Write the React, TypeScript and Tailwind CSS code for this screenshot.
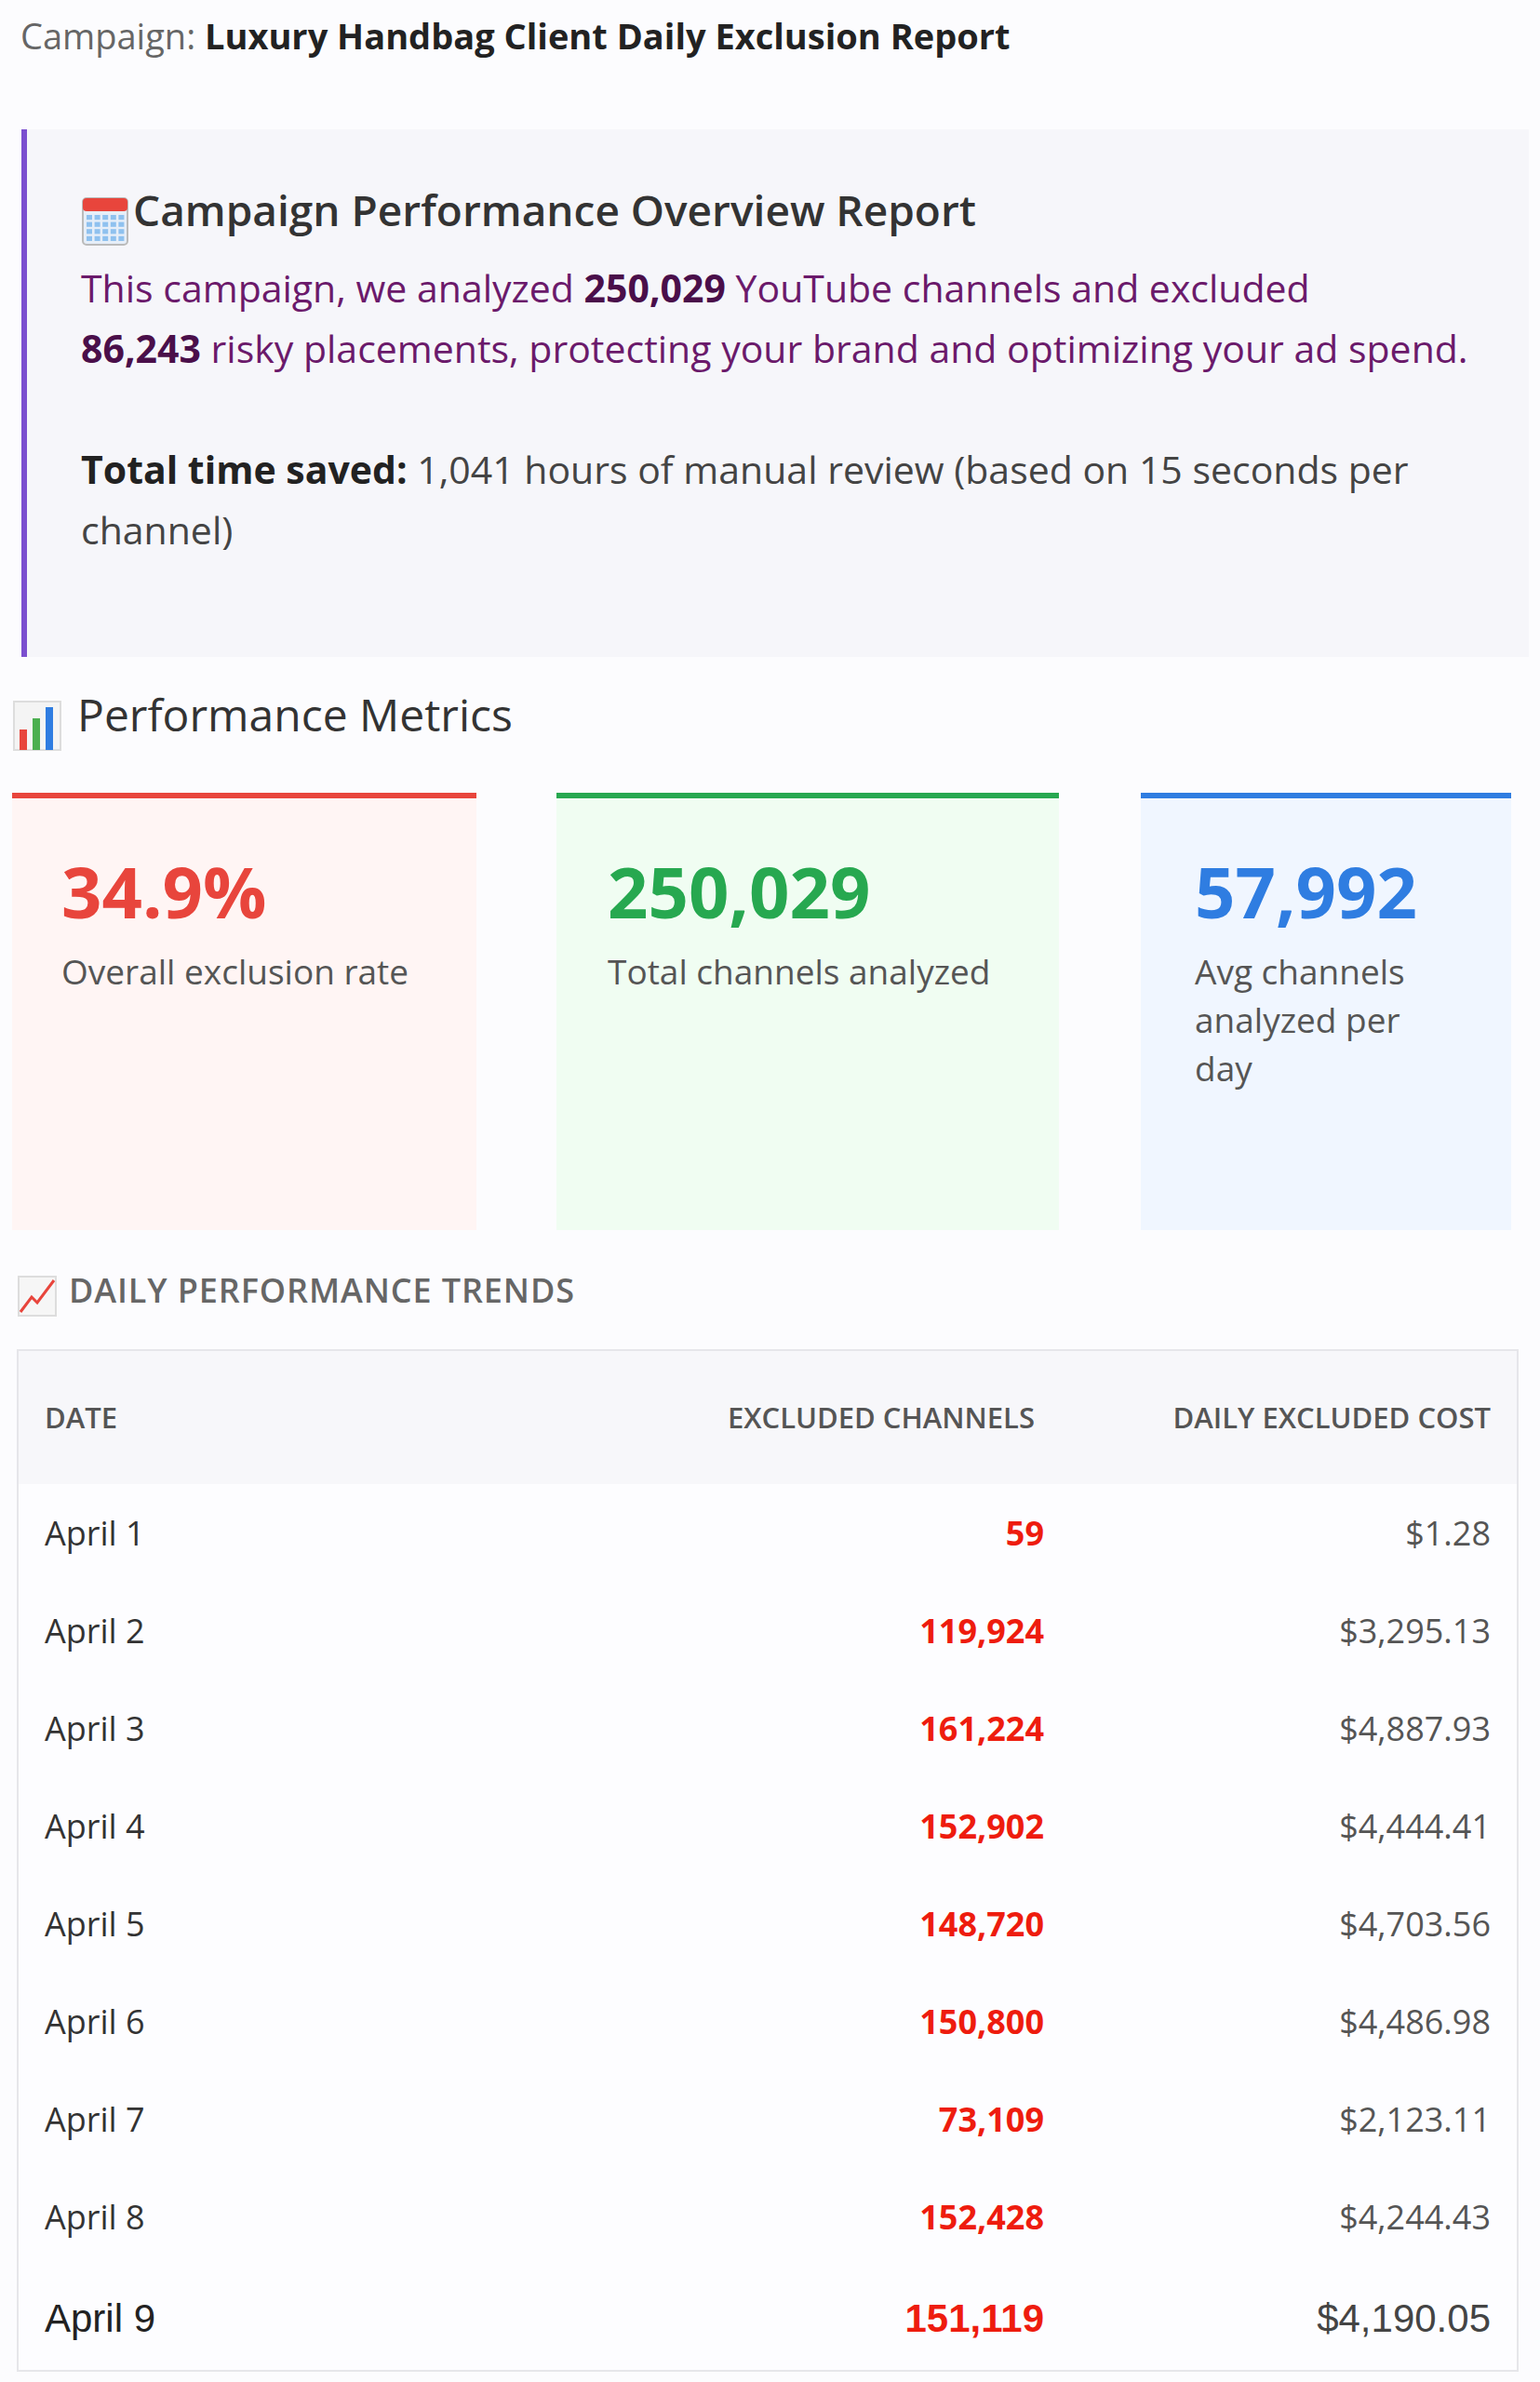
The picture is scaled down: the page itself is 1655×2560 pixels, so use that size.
import React from "react";

const rows = [
  ["April 1", "59", "$1.28"],
  ["April 2", "119,924", "$3,295.13"],
  ["April 3", "161,224", "$4,887.93"],
  ["April 4", "152,902", "$4,444.41"],
  ["April 5", "148,720", "$4,703.56"],
  ["April 6", "150,800", "$4,486.98"],
  ["April 7", "73,109", "$2,123.11"],
  ["April 8", "152,428", "$4,244.43"],
];

const Calendar = () => (
  <svg width="52" height="56" viewBox="0 0 26 28" className="inline-block mr-1 -mb-2">
    <rect x="1" y="2" width="24" height="25" rx="2" fill="#e6eef8" stroke="#bbb" />
    <rect x="1" y="2" width="24" height="7" rx="2" fill="#e8453c" />
    {[0, 1, 2, 3].map((r) =>
      [0, 1, 2, 3, 4].map((c) => (
        <rect key={r + "-" + c} x={3 + c * 4.3} y={11 + r * 3.8} width="3" height="2.6" fill="#8fc1ef" />
      ))
    )}
  </svg>
);

const Bars = () => (
  <svg width="54" height="56" viewBox="0 0 27 28" className="inline-block mr-4 -mb-2">
    <rect x="1" y="1" width="25" height="26" fill="#f4f4f4" stroke="#ddd" />
    <rect x="4" y="16" width="4" height="11" fill="#e8453c" />
    <rect x="11" y="10" width="4" height="17" fill="#4caf50" />
    <rect x="18" y="4" width="4" height="23" fill="#2f7de1" />
  </svg>
);

const Trend = () => (
  <svg width="44" height="46" viewBox="0 0 22 23" className="inline-block mr-3 -mb-1">
    <rect x="1" y="1" width="20" height="21" fill="#f6f6f6" stroke="#ddd" />
    <path d="M2 20 L8 12 L11 15 L20 3" stroke="#e8453c" strokeWidth="1.5" fill="none" />
  </svg>
);

export default function App() {
  const font = { fontFamily: '"Open Sans", "Noto Sans", sans-serif' };
  const lib = { fontFamily: '"Liberation Sans", Arial, sans-serif' };
  return (
    <div className="w-[1655px] h-[2560px] bg-[#fcfcfe] text-[#333] overflow-hidden" style={font}>
      <div className="pl-[22px] pt-[10px] text-[38px] leading-[56px] text-[#666]">
        Campaign: <span className="font-bold text-[#222]">Luxury Handbag Client Daily Exclusion Report</span>
      </div>

      <div className="ml-[23px] mr-[12px] mt-[73px] h-[567px] bg-[#f6f6fa] border-l-[6px] border-[#7b4fcf] pl-[58px] pt-[54px]">
        <div className="text-[46px] leading-[64px] text-[#333] font-semibold flex items-end">
          <Calendar />
          Campaign Performance Overview Report
        </div>
        <p className="mt-[20px] text-[41px] leading-[65px] text-[#6b1a6b]">
          This campaign, we analyzed <b className="text-[#4a0f4a]">250,029</b> YouTube channels and excluded
          <br />
          <b className="text-[#4a0f4a]">86,243</b> risky placements, protecting your brand and optimizing your ad spend.
        </p>
        <p className="mt-[65px] text-[41px] leading-[65px] text-[#444] pr-[100px]">
          <b className="text-[#222]">Total time saved:</b> 1,041 hours of manual review (based on 15 seconds per channel)
        </p>
      </div>

      <div className="pl-[13px] mt-[30px] text-[48px] leading-[64px] font-medium text-[#333] flex items-end">
        <Bars />
        Performance Metrics
      </div>

      <div className="mt-[52px] flex pl-[13px]">
        <div className="w-[499px] h-[470px] bg-[#fff5f4] border-t-[6px] border-[#e8453c] pl-[53px] pt-[62px]">
          <div className="text-[76px] font-bold text-[#e8453c] leading-none">34.9%</div>
          <div className="mt-[22px] text-[37px] leading-[52px] text-[#555]">Overall exclusion rate</div>
        </div>
        <div className="ml-[86px] w-[540px] h-[470px] bg-[#f0fdf2] border-t-[6px] border-[#27a850] pl-[55px] pt-[62px]">
          <div className="text-[76px] font-bold text-[#27a850] leading-none">250,029</div>
          <div className="mt-[22px] text-[37px] leading-[52px] text-[#555]">Total channels analyzed</div>
        </div>
        <div className="ml-[88px] w-[398px] h-[470px] bg-[#f0f6ff] border-t-[6px] border-[#2f7de1] pl-[58px] pt-[62px] pr-[80px]">
          <div className="text-[76px] font-bold text-[#2f7de1] leading-none">57,992</div>
          <div className="mt-[22px] text-[37px] leading-[52px] text-[#555]">Avg channels analyzed per day</div>
        </div>
      </div>

      <div className="pl-[18px] mt-[40px] text-[36px] leading-[50px] font-semibold text-[#666] tracking-wide flex items-end">
        <Trend />
        DAILY PERFORMANCE TRENDS
      </div>

      <div className="ml-[18px] mt-[38px] w-[1614px] border-2 border-[#e6e6ea] bg-[#fdfdff]">
        <div className="h-[143px] bg-[#f7f7fa] flex items-center text-[31px] font-semibold text-[#555] px-[28px]">
          <div className="flex-1">DATE</div>
          <div className="w-[500px] text-right pr-[10px]">EXCLUDED CHANNELS</div>
          <div className="w-[480px] text-right">DAILY EXCLUDED COST</div>
        </div>
        {rows.map((r) => (
          <div key={r[0]} className="h-[105px] flex items-center text-[36px] px-[28px]">
            <div className="flex-1 text-[#333]">{r[0]}</div>
            <div className="w-[500px] text-right font-bold text-[#ee1c0e]">{r[1]}</div>
            <div className="w-[480px] text-right text-[#555]">{r[2]}</div>
          </div>
        ))}
        <div className="h-[112px] flex items-center text-[42px] px-[28px]">
          <div className="flex-1 text-[#222]" style={lib}>April 9</div>
          <div className="w-[500px] text-right font-bold text-[#ee1c0e]" style={lib}>151,119</div>
          <div className="w-[480px] text-right text-[#444]" style={lib}>$4,190.05</div>
        </div>
      </div>
    </div>
  );
}
